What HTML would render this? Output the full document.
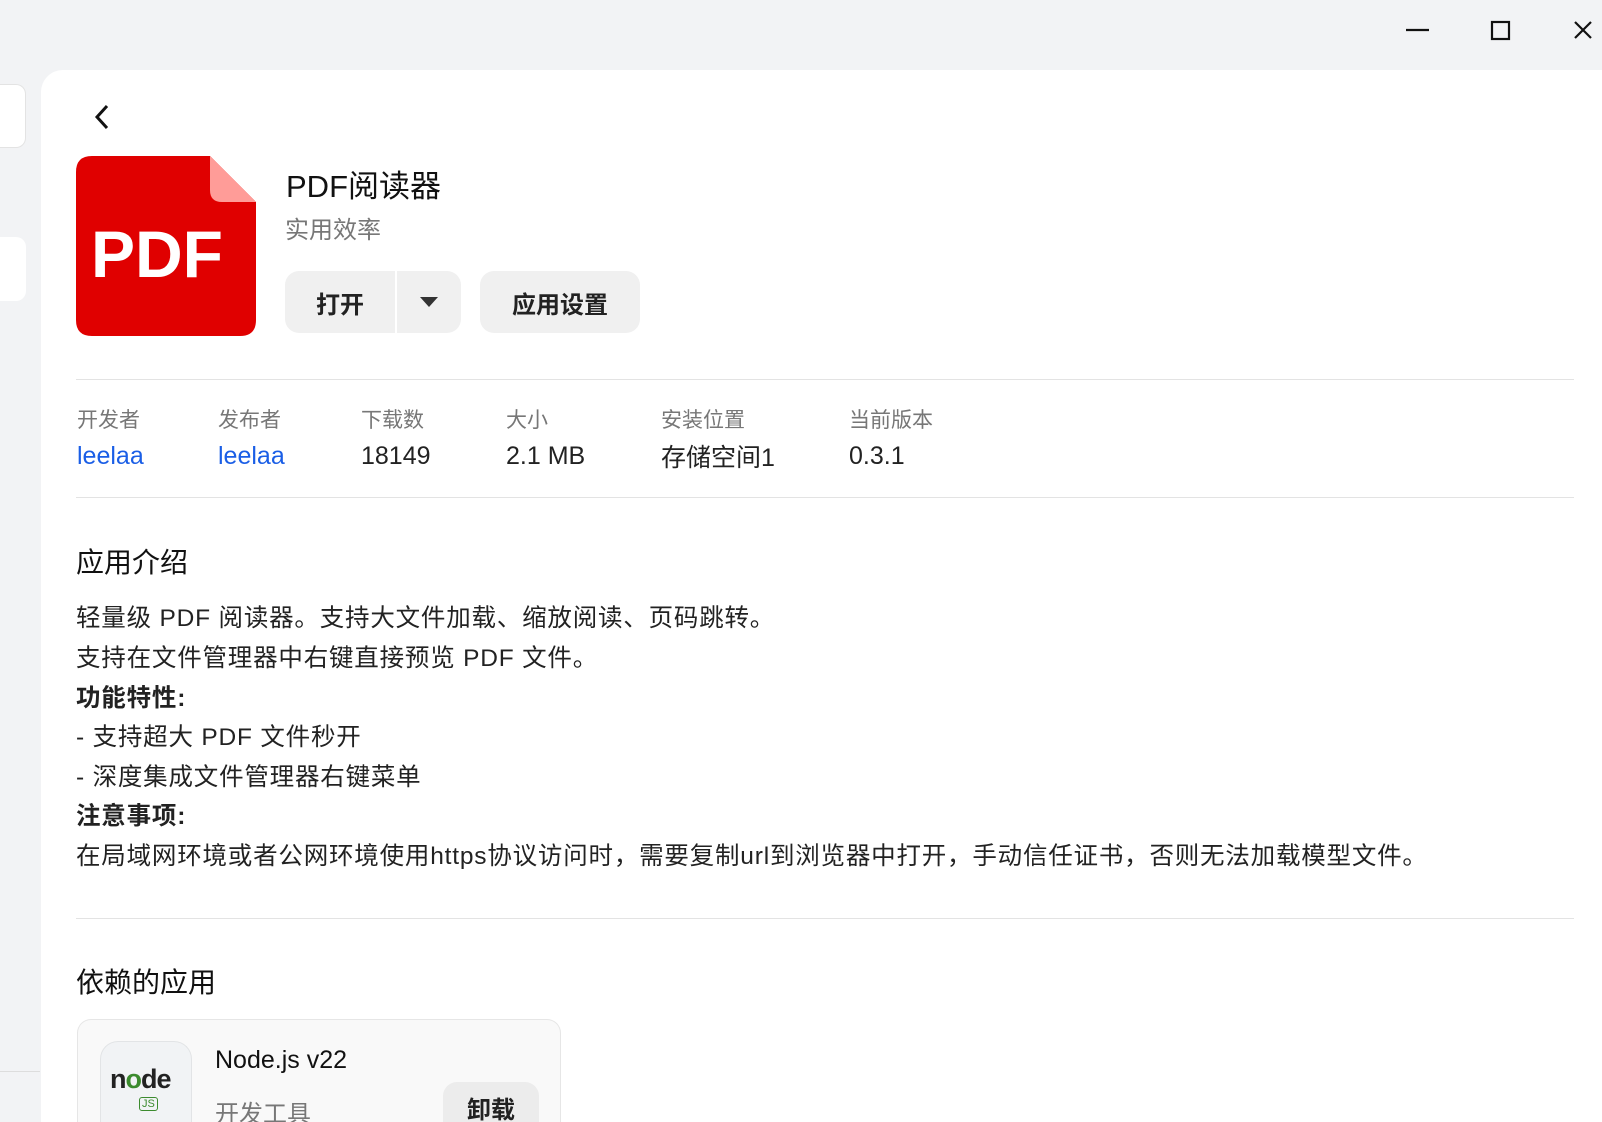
<!DOCTYPE html>
<html><head><meta charset="utf-8"><style>
*{margin:0;padding:0;box-sizing:border-box}
html{width:1602px;height:1122px;overflow:hidden}
body{width:1602px;height:1122px;overflow:hidden;background:#f2f3f5;font-family:"Liberation Sans","Noto Sans CJK SC",sans-serif;color:#1a1a1a;position:relative}
.abs{position:absolute}
.card{left:41px;top:70px;width:1561px;height:1052px;background:#fff;border-radius:22px 0 0 0}
.t{position:absolute;white-space:nowrap}
.line{position:absolute;left:76px;width:1498px;height:1px;background:#e3e3e3}
.lbl{font-size:21px;color:#777}
.val{font-size:25px;color:#222}
.desc{font-size:24.5px;color:#222;left:76px;letter-spacing:0.8px}
.btn{position:absolute;background:#f0f0f0;border-radius:14px;font-weight:bold;font-size:24px;color:#222;display:flex;align-items:center;justify-content:center}
</style></head><body>
<div class="abs" style="left:0;top:84px;width:26px;height:64px;background:#fff;border:1px solid #e3e3e3;border-left:none;border-radius:0 10px 10px 0"></div>
<div class="abs" style="left:0;top:237px;width:26px;height:64px;background:#fff;border-radius:0 10px 10px 0"></div>
<div class="abs" style="left:0;top:1071px;width:40px;height:1px;background:#ddd"></div>
<svg class="abs" style="left:1400px;top:14px" width="200" height="36" viewBox="0 0 200 36">
<line x1="6" y1="16" x2="29" y2="16" stroke="#111" stroke-width="2.2"/>
<rect x="92" y="8" width="17" height="17" fill="none" stroke="#111" stroke-width="2.2"/>
<path d="M175 8 L191 24 M191 8 L175 24" stroke="#111" stroke-width="2.2"/>
</svg>
<div class="abs card"></div>
<svg class="abs" style="left:90px;top:103px" width="24" height="28"><path d="M17 3 L7 14 L17 25" fill="none" stroke="#111" stroke-width="3"/></svg>
<svg class="abs" style="left:76px;top:156px" width="180" height="180" viewBox="0 0 180 180">
<path d="M16 0 H134 L180 46 V164 Q180 180 164 180 H16 Q0 180 0 164 V16 Q0 0 16 0Z" fill="#e00000"/>
<path d="M134 0 L180 46 H146 Q134 46 134 34Z" fill="#ff9c98"/>
<text x="15" y="121" font-family="Liberation Sans" font-weight="bold" font-size="66" fill="#fff">PDF</text>
</svg>
<div class="t" style="left:286px;top:161px;font-size:31px;color:#111">PDF阅读器</div>
<div class="t" style="left:285px;top:210px;font-size:24px;color:#777">实用效率</div>
<div class="btn" style="left:285px;top:271px;width:110px;height:62px;border-radius:14px 0 0 14px">打开</div>
<div class="btn" style="left:397px;top:271px;width:64px;height:62px;border-radius:0 14px 14px 0"><svg width="18" height="12"><path d="M0 1 H18 L9 11Z" fill="#333"/></svg></div>
<div class="btn" style="left:480px;top:271px;width:160px;height:62px">应用设置</div>
<div class="line" style="top:379px"></div>
<div class="t lbl" style="left:77px;top:404px">开发者</div>
<div class="t lbl" style="left:218px;top:404px">发布者</div>
<div class="t lbl" style="left:361px;top:404px">下载数</div>
<div class="t lbl" style="left:506px;top:404px">大小</div>
<div class="t lbl" style="left:661px;top:404px">安装位置</div>
<div class="t lbl" style="left:849px;top:404px">当前版本</div>
<div class="t val" style="left:77px;top:442px;color:#1a5ee6">leelaa</div>
<div class="t val" style="left:218px;top:442px;color:#1a5ee6">leelaa</div>
<div class="t val" style="left:361px;top:442px">18149</div>
<div class="t val" style="left:506px;top:442px">2.1 MB</div>
<div class="t val" style="left:661px;top:438px">存储空间1</div>
<div class="t val" style="left:849px;top:442px">0.3.1</div>
<div class="line" style="top:497px"></div>
<div class="t" style="left:76px;top:541px;font-size:28px;color:#111">应用介绍</div>
<div class="t desc" style="top:599px">轻量级 PDF 阅读器。支持大文件加载、缩放阅读、页码跳转。</div>
<div class="t desc" style="top:639px">支持在文件管理器中右键直接预览 PDF 文件。</div>
<div class="t desc" style="top:679px;font-weight:bold">功能特性:</div>
<div class="t desc" style="top:718px">- 支持超大 PDF 文件秒开</div>
<div class="t desc" style="top:758px">- 深度集成文件管理器右键菜单</div>
<div class="t desc" style="top:797px;font-weight:bold">注意事项:</div>
<div class="t desc" style="top:837px">在局域网环境或者公网环境使用https协议访问时，需要复制url到浏览器中打开，手动信任证书，否则无法加载模型文件。</div>
<div class="line" style="top:918px"></div>
<div class="t" style="left:76px;top:961px;font-size:28px;color:#111">依赖的应用</div>
<div class="abs" style="left:77px;top:1019px;width:484px;height:103px;background:#f9f9f9;border:1px solid #e6e6e6;border-bottom:none;border-radius:14px 14px 0 0"></div>
<div class="abs" style="left:100px;top:1041px;width:92px;height:81px;background:#f1f3f5;border:1px solid #e2e4e6;border-bottom:none;border-radius:18px 18px 0 0"></div>
<div class="t" style="left:110px;top:1064px;font-size:27px;font-weight:bold;color:#222;letter-spacing:-1px">n<span style="color:#3c8b2e">o</span>de</div>
<div class="t" style="left:139px;top:1097px;font-size:11px;color:#3c8b2e;border:1.5px solid #3c8b2e;border-radius:3px;padding:0 2px">JS</div>
<div class="t" style="left:215px;top:1046px;font-size:25px;color:#111">Node.js v22</div>
<div class="t" style="left:215px;top:1094px;font-size:24px;color:#777">开发工具</div>
<div class="btn" style="left:443px;top:1082px;width:96px;height:40px;background:#ececec;border-radius:14px 14px 0 0;align-items:flex-start;padding-top:8px;overflow:hidden">卸载</div>
</body></html>
